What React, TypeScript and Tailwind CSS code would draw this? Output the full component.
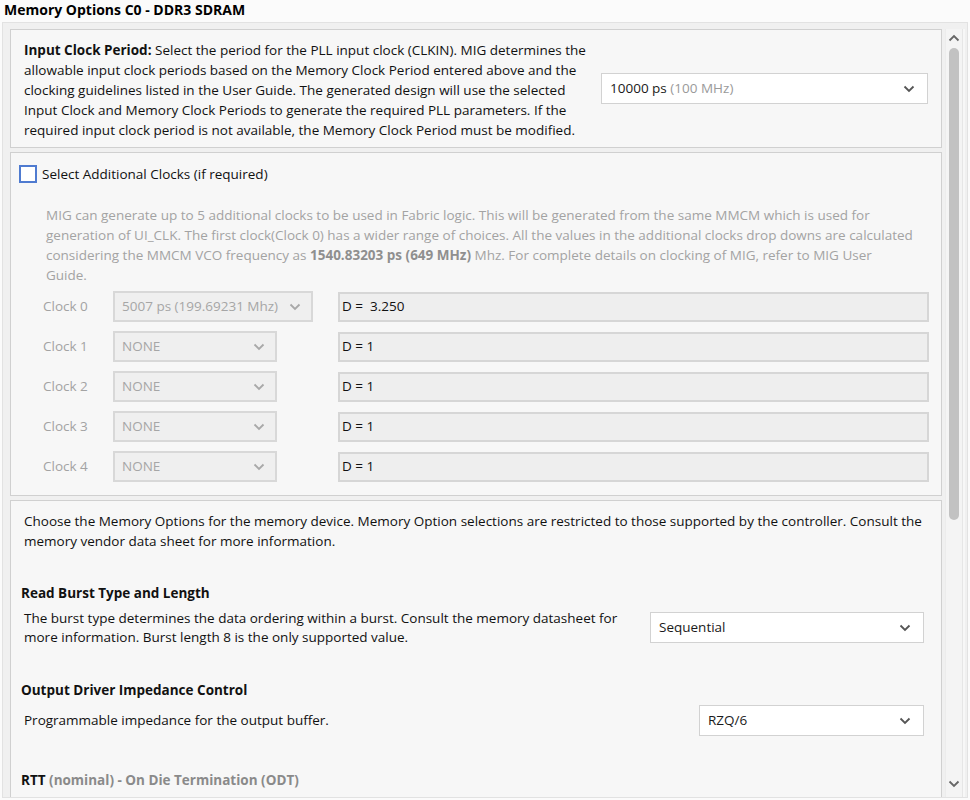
import React from "react";

const Chevron = ({ color = "#555" }: { color?: string }) => (
  <svg width="12" height="8" viewBox="0 0 12 8" className="shrink-0">
    <path d="M1.5 1.5 L6 6 L10.5 1.5" fill="none" stroke={color} strokeWidth="1.8" />
  </svg>
);

const Lines = ({ lines, className = "" }: { lines: React.ReactNode[]; className?: string }) => (
  <div className={className}>
    {lines.map((l, i) => (
      <div key={i} className="whitespace-nowrap h-[20px] leading-[20px]">
        {l}
      </div>
    ))}
  </div>
);

const Select = ({ children, className = "" }: { children: React.ReactNode; className?: string }) => (
  <div
    className={`h-[31px] bg-white border border-[#d2d2d2] flex items-center justify-between pl-[8px] pr-[12px] ${className}`}
  >
    <span className="whitespace-nowrap text-[#1a1a1a]">{children}</span>
    <Chevron />
  </div>
);

const DisSelect = ({ children, className = "" }: { children: React.ReactNode; className?: string }) => (
  <div
    className={`h-[31px] bg-[#efefef] border-2 border-[#d8d8d8] flex items-center justify-between pl-[7px] pr-[10px] ${className}`}
  >
    <span className="whitespace-nowrap text-[#a6a6a6]">{children}</span>
    <Chevron color="#a8a8a8" />
  </div>
);

const DField = ({ children }: { children: React.ReactNode }) => (
  <div className="h-[30px] w-[591px] bg-[#eeeeee] border-2 border-[#d6d6d6] flex items-center pl-[2px] text-[#111] whitespace-pre">
    {children}
  </div>
);

export default function App() {
  const clocks = [
    { label: "Clock 0", sel: "5007 ps (199.69231 Mhz)", w: "w-[200px]", d: "D =  3.250" },
    { label: "Clock 1", sel: "NONE", w: "w-[164px]", d: "D = 1" },
    { label: "Clock 2", sel: "NONE", w: "w-[164px]", d: "D = 1" },
    { label: "Clock 3", sel: "NONE", w: "w-[164px]", d: "D = 1" },
    { label: "Clock 4", sel: "NONE", w: "w-[164px]", d: "D = 1" },
  ];
  return (
    <div className="w-[970px] h-[800px] bg-[#fbfbfb] font-['Open_Sans',sans-serif] text-[13.5px] text-[#111] overflow-hidden">
      <div className="h-[22px] pl-[4px] font-bold text-[14px] leading-[20px] text-black">Memory Options C0 - DDR3 SDRAM</div>
      <div className="ml-[2px] w-[966px] h-[776px] border border-[#e2e2e2] bg-[#f0f0f0] flex overflow-hidden">
        <div className="w-[932px] ml-[7px] mt-[6px] flex flex-col gap-[4px] shrink-0">
          {/* Panel 1 */}
          <div className="h-[119px] bg-[#f7f7f7] border border-[#d0d0d0] flex items-center justify-between pl-[13px] pr-[13px]">
            <Lines
              className="mt-[2px]"
              lines={[
                <>
                  <b>Input Clock Period:</b> Select the period for the PLL input clock (CLKIN). MIG determines the
                </>,
                "allowable input clock periods based on the Memory Clock Period entered above and the",
                "clocking guidelines listed in the User Guide. The generated design will use the selected",
                "Input Clock and Memory Clock Periods to generate the required PLL parameters. If the",
                "required input clock period is not available, the Memory Clock Period must be modified.",
              ]}
            />
            <Select className="w-[327px]">
              10000 ps <span className="text-[#9a9a9a]">(100 MHz)</span>
            </Select>
          </div>
          {/* Panel 2 */}
          <div className="h-[344px] bg-[#f7f7f7] border border-[#d0d0d0] flex flex-col">
            <div className="flex items-center mt-[11px] ml-[8px] h-[20px]">
              <div className="w-[18px] h-[18px] border-2 border-[#4f7bd0] bg-white" />
              <span className="ml-[5px]">Select Additional Clocks (if required)</span>
            </div>
            <Lines
              className="ml-[35px] mt-[21px] text-[#a3a3a3]"
              lines={[
                "MIG can generate up to 5 additional clocks to be used in Fabric logic. This will be generated from the same MMCM which is used for",
                "generation of UI_CLK. The first clock(Clock 0) has a wider range of choices. All the values in the additional clocks drop downs are calculated",
                <>
                  considering the MMCM VCO frequency as <b className="text-[#8f8f8f]">1540.83203 ps (649 MHz)</b> Mhz. For complete details on clocking of MIG, refer to MIG User
                </>,
                "Guide.",
              ]}
            />
            <div className="flex flex-col gap-[9px] mt-[6px] ml-[32px]">
              {clocks.map((c) => (
                <div key={c.label} className="flex items-center h-[31px]">
                  <span className="w-[70px] text-[#a3a3a3]">{c.label}</span>
                  <DisSelect className={c.w}>{c.sel}</DisSelect>
                  <div className="flex-1" />
                  <div className="mr-[12px]">
                    <DField>{c.d}</DField>
                  </div>
                </div>
              ))}
            </div>
          </div>
          {/* Panel 3 */}
          <div className="flex-1 bg-[#f7f7f7] border border-[#d0d0d0] border-b-0 pl-[13px] pr-[17px]">
            <Lines
              className="mt-[10px]"
              lines={[
                "Choose the Memory Options for the memory device. Memory Option selections are restricted to those supported by the controller. Consult the",
                "memory vendor data sheet for more information.",
              ]}
            />
            <div className="mt-[32px] -ml-[3px] font-bold h-[20px] leading-[20px]">Read Burst Type and Length</div>
            <div className="flex justify-between items-start mt-[5px]">
              <div className="flex flex-col">
                <div className="h-[20px] leading-[20px] whitespace-nowrap">The burst type determines the data ordering within a burst. Consult the memory datasheet for</div>
                <div className="h-[19px] leading-[19px] whitespace-nowrap">more information. Burst length 8 is the only supported value.</div>
              </div>
              <Select className="w-[274px] mt-[4px]">Sequential</Select>
            </div>
            <div className="mt-[33px] -ml-[3px] font-bold h-[20px] leading-[20px]">Output Driver Impedance Control</div>
            <div className="flex justify-between items-center mt-[5px]">
              <div className="whitespace-nowrap">Programmable impedance for the output buffer.</div>
              <Select className="w-[225px]">RZQ/6</Select>
            </div>
            <div className="mt-[34px] -ml-[3px] font-bold h-[20px] leading-[20px] whitespace-nowrap">
              RTT <span className="text-[#8a8a8a]">(nominal) - On Die Termination (ODT)</span>
            </div>
          </div>
        </div>
        {/* Scrollbar */}
        <div className="w-[17px] ml-[3px] mt-[6px] bg-[#f4f4f4] border-l border-[#ececec] flex flex-col items-center shrink-0">
          <div className="h-[18px] flex items-center justify-center">
            <svg width="12" height="8" viewBox="0 0 12 8">
              <path d="M1.5 6.5 L6 2 L10.5 6.5" fill="none" stroke="#666" strokeWidth="1.8" />
            </svg>
          </div>
          <div className="w-[10px] h-[472px] rounded-full bg-[#c2c2c2] mt-[1px]" />
          <div className="flex-1" />
          <div className="h-[18px] flex items-center justify-center mb-[4px]">
            <svg width="12" height="8" viewBox="0 0 12 8">
              <path d="M1.5 1.5 L6 6 L10.5 1.5" fill="none" stroke="#666" strokeWidth="1.8" />
            </svg>
          </div>
        </div>
        <div className="w-[3px] bg-[#f7f7f7] border-l border-[#e6e6e6] mt-[6px]" />
      </div>
    </div>
  );
}
